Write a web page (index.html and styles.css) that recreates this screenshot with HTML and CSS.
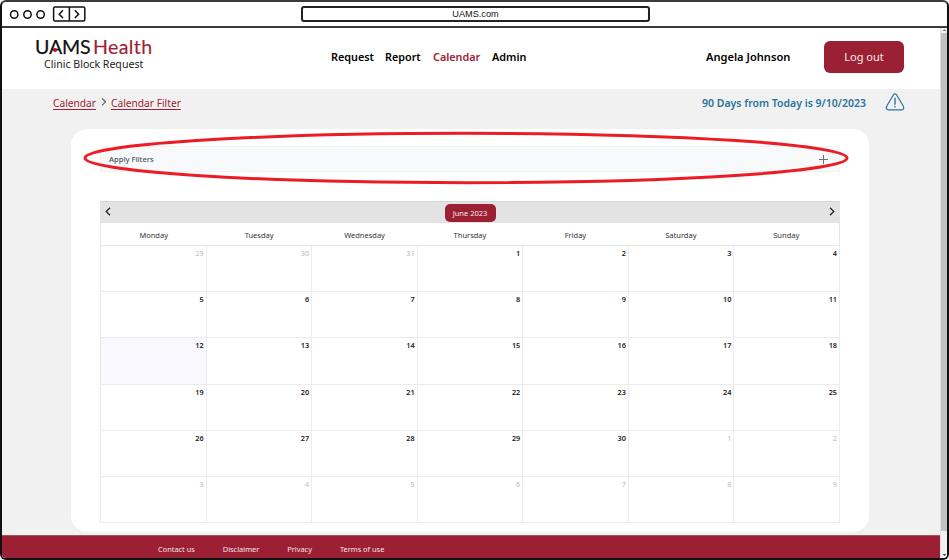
FILE: index.html
```html
<!DOCTYPE html>
<html lang="en">
<head>
<meta charset="utf-8">
<title>UAMS Health – Clinic Block Request</title>
<link rel="stylesheet" href="styles.css">
</head>
<body>
<div class="window">
  <div class="titlebar">
    <svg class="controls" width="88" height="24" viewBox="0 0 88 24" fill="none" stroke="#111" stroke-width="1.5">
      <circle cx="12.2" cy="12.5" r="3.7"/><circle cx="25.5" cy="12.5" r="3.7"/><circle cx="38.6" cy="12.5" r="3.7"/>
      <rect x="51.6" y="5" width="31.2" height="14" rx="1.5"/>
      <path d="M67.4 5v14M61 8.3l-3.8 3.9 3.8 3.9M72.8 8.3l3.8 3.9-3.8 3.9"/>
    </svg>
    <div class="address"><span>UAMS.com</span></div>
  </div>
  <div class="viewport">
    <div class="page">
      <header class="header">
        <div class="brand">
          <div class="logo"><span class="uams">UAMS<i class="dot"></i></span><span class="health">Health</span></div>
          <div class="tagline">Clinic Block Request</div>
        </div>
        <nav class="nav"><a class="n1">Request</a><a class="n2">Report</a><a class="n3 active">Calendar</a><a class="n4">Admin</a></nav>
        <div class="user">Angela Johnson</div>
        <button class="logout">Log out</button>
      </header>
      <div class="subbar">
        <a class="crumb c1">Calendar</a>
        <svg class="sep" width="6" height="10" viewBox="0 0 6 10" fill="none" stroke="#555" stroke-width="1.1"><path d="M1 1.3l3.5 3.5L1 8.3"/></svg>
        <a class="crumb c2">Calendar Filter</a>
        <div class="notice">90 Days from Today is 9/10/2023</div>
        <svg class="warn" width="20" height="18" viewBox="0 0 20 18" fill="none" stroke="#2b749b" stroke-width="1.2" stroke-linecap="round" stroke-linejoin="round"><path d="M8.5 1.7Q10 0 11.5 1.7L18.4 13.2Q19.5 16.5 16.6 16.8H3.4Q.5 16.5 1.6 13.2Z"/><path d="M10 5.3v6M10 13.5v.5" stroke-width="1.4"/></svg>
      </div>
      <main class="card">
        <div class="filters">
          <span>Apply Filters</span>
          <svg width="9" height="9" viewBox="0 0 9 9" stroke="#6a7178" stroke-width="1"><path d="M4.5 0v9M0 4.5h9"/></svg>
          <svg class="highlight" width="768" height="58" viewBox="0 0 768 58" fill="none" stroke="#ed1c24" stroke-width="3"><ellipse cx="384" cy="29" rx="381" ry="24.7"/></svg>
        </div>
        <section class="calendar">
          <div class="monthbar">
            <svg width="6" height="9" viewBox="0 0 6 9" fill="none" stroke="#222" stroke-width="1.3"><path d="M5 .8L1.2 4.5 5 8.2"/></svg>
            <span class="month">June 2023</span>
            <svg width="6" height="9" viewBox="0 0 6 9" fill="none" stroke="#222" stroke-width="1.3"><path d="M1 .8l3.8 3.7L1 8.2"/></svg>
          </div>
          <div class="weekdays"><span>Monday</span><span>Tuesday</span><span>Wednesday</span><span>Thursday</span><span>Friday</span><span>Saturday</span><span>Sunday</span></div>
          <div class="days">
            <b class="out">29</b><b class="out">30</b><b class="out">31</b><b>1</b><b>2</b><b>3</b><b>4</b>
            <b>5</b><b>6</b><b>7</b><b>8</b><b>9</b><b>10</b><b>11</b>
            <b class="today">12</b><b>13</b><b>14</b><b>15</b><b>16</b><b>17</b><b>18</b>
            <b>19</b><b>20</b><b>21</b><b>22</b><b>23</b><b>24</b><b>25</b>
            <b>26</b><b>27</b><b>28</b><b>29</b><b>30</b><b class="out">1</b><b class="out">2</b>
            <b class="out">3</b><b class="out">4</b><b class="out">5</b><b class="out">6</b><b class="out">7</b><b class="out">8</b><b class="out">9</b>
          </div>
        </section>
      </main>
      <footer class="footer"><a>Contact us</a><a>Disclaimer</a><a>Privacy</a><a>Terms of use</a></footer>
    </div>
    <div class="scrollbar">
      <svg width="7" height="5" viewBox="0 0 7 5"><path d="M1.5 3L3.5 1l2 2z" fill="#888"/></svg>
      <div class="thumb"></div>
      <svg width="7" height="5" viewBox="0 0 7 5"><path d="M1.5 1L3.5 3l2-2z" fill="#444"/></svg>
    </div>
  </div>
</div>
</body>
</html>
```
FILE: styles.css
```css
* { box-sizing: border-box; }
body { margin: 0; background: #fff; font-family: "Noto Sans", "Open Sans", sans-serif; color: #111; white-space: nowrap; overflow: hidden; }
.window { width: 949px; height: 560px; border: 2px solid #111; border-top-color: #3b3b3b; border-radius: 6px; overflow: hidden; display: flex; flex-direction: column; }
.titlebar { height: 26px; flex: none; border-bottom: 2px solid #3b3b3b; display: flex; align-items: flex-start; }
.controls { flex: none; }
.address { margin: 4px 0 0 211px; width: 349px; height: 16px; border: 2px solid #222; border-radius: 3px; font: 9.2px/12px "Liberation Sans", sans-serif; text-align: center; }
.viewport { flex: 1; display: flex; min-height: 0; }
.page { flex: 1; background: #f1f1f1; display: flex; flex-direction: column; }
.header { height: 61px; flex: none; background: #fff; display: flex; align-items: center; padding-bottom: 4px; }
.brand { width: 295px; margin-left: 33px; margin-right: 1px; padding-bottom: 5px; }
.logo { font-family: Lato, sans-serif; font-size: 19.6px; line-height: 19px; display: flex; gap: 3px; }
.uams { position: relative; letter-spacing: -.2px; width: 55px; -webkit-text-stroke: .25px #111; }
.health { color: #9d2235; letter-spacing: .35px; -webkit-text-stroke: .15px #9d2235; }
.dot { position: absolute; left: 18px; top: 11px; width: 4px; height: 4px; border-radius: 50%; background: #c8102e; }
.tagline { font-size: 10.6px; line-height: 14px; margin-left: 9px; padding-top: 1px; color: #222; }
.nav { display: flex; font-weight: 600; font-size: 10.8px; width: 375px; color: #000; }
.nav a { flex: none; }
.n1 { width: 54px; }
.n2 { width: 48px; }
.n3 { width: 59px; }
.nav .active { color: #9d2235; }
.user { width: 118px; font-weight: 600; font-size: 11.1px; color: #000; }
.logout { width: 80px; height: 32px; border: 0; border-radius: 6px; background: #9b2033; color: #f6e9eb; font: 11px "Noto Sans", sans-serif; padding: 0; }
.subbar { height: 27px; flex: none; display: flex; align-items: center; padding-left: 51px; }
.crumb { color: #9d2235; font-size: 10.2px; text-decoration: underline; text-underline-offset: 1.5px; }
.c1 { width: 43px; }
.sep { margin: 0 4px 1px 5px; }
.notice { margin-left: auto; color: #2b749b; font-weight: 600; font-size: 10.5px; }
.warn { margin: 0 35px 1px 19px; }
.card { width: 798px; height: 403px; margin: 13px 0 3px 69px; flex: none; background: #fff; border-radius: 16px; padding: 17px 29px 0; }
.filters { position: relative; height: 26px; background: #f7f9fb; border: 1px solid #eff1f2; border-radius: 4px 4px 0 0; padding: 0 11px 0 8px; display: flex; align-items: center; justify-content: space-between; font-size: 7.6px; color: #4c5257; font-weight: 500; }
.highlight { position: absolute; left: -19px; top: -18px; }
.calendar { margin-top: 29px; }
.monthbar { height: 22px; background: #e3e3e3; border-top: 1px solid #d7d7d7; display: flex; align-items: center; justify-content: space-between; padding: 0 5px; }
.monthbar svg { margin-bottom: 2px; }
.month { width: 51px; height: 18px; border-radius: 5px; background: #9b2033; color: #f6e9eb; font-size: 7.5px; line-height: 18px; text-align: center; }
.weekdays { height: 22px; border: solid #e7e7e7; border-width: 0 1px; display: grid; grid-template-columns: repeat(7, 1fr); align-items: center; text-align: center; font-size: 7.5px; color: #333; padding-top: 1px; }
.days { height: 278px; display: grid; grid-template: repeat(6, 1fr) / repeat(7, 1fr); border: 1px solid #e7e7e7; border-width: 1px 0 0 1px; }
.days b { border: solid #ececec; border-width: 0 1px 1px 0; font-size: 7.3px; font-weight: 600; line-height: 9px; padding: 3px 2px 0 0; text-align: right; color: #222; }
.days .out { color: #c4c4c4; font-weight: 500; }
.days .today { background: #f9f8fe; }
.footer { flex: 1; background: #9b2033; border-top: 1px solid #a6525f; color: #f3e3e6; font-size: 7.4px; display: flex; gap: 28px; align-items: center; padding: 3px 0 0 156px; }
.scrollbar { width: 7px; background: #f1f1f1; display: flex; flex-direction: column; border-left: 1px solid #e0e0e0; }
.scrollbar svg { flex: none; }
.thumb { height: 498px; background: #c1c1c1; margin-bottom: auto; }
```
